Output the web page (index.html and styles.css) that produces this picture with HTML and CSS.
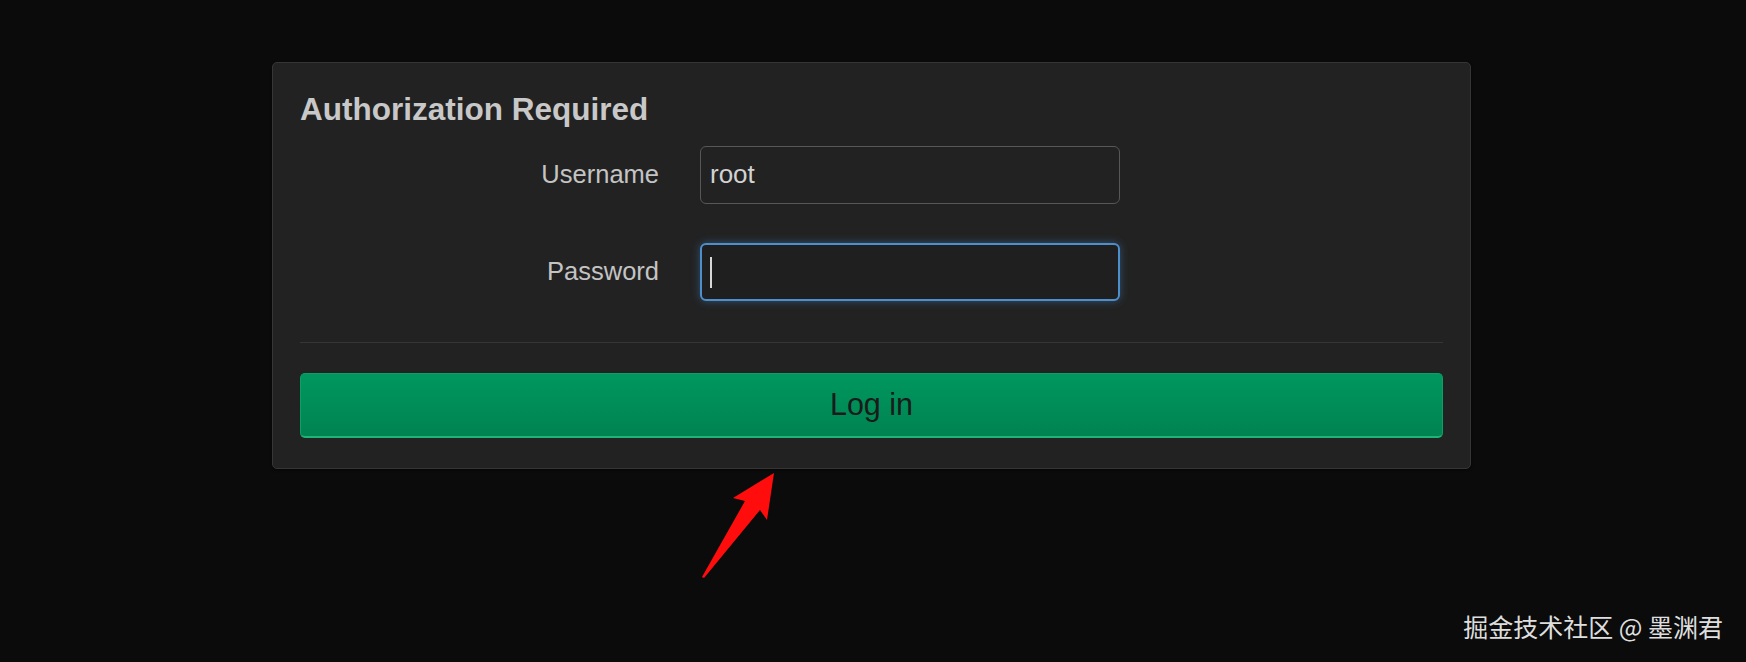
FILE: index.html
```html
<!DOCTYPE html>
<html lang="en">
<head>
  <meta charset="UTF-8" />
  <meta name="viewport" content="width=device-width, initial-scale=1.0"/>
  <title>Authorization Required</title>
  <link rel="stylesheet" href="styles.css">
</head>
<body>
  <div class="page">
    <form class="login-card" onsubmit="return false">
      <h2 class="login-title">Authorization Required</h2>

      <div class="field-row">
        <label class="field-label" for="username">Username</label>
        <input class="field-input" id="username" type="text" value="root">
      </div>

      <div class="field-row">
        <label class="field-label" for="password">Password</label>
        <div class="field-wrap">
          <input class="field-input focused" id="password" type="password">
          <span class="caret"></span>
        </div>
      </div>

      <hr class="divider">

      <button class="login-btn" type="submit">Log in</button>
    </form>
  </div>

  <!-- red pointer drawn over the screenshot -->
  <svg class="pointer" width="1746" height="662" viewBox="0 0 1746 662">
    <polygon points="774,473 767,520 760,510 704,578 702,577 745,501 733,498" fill="#ff0d0d"/>
  </svg>

  <div class="watermark">掘金技术社区 @ 墨渊君</div>
</body>
</html>
```

FILE: styles.css
```css
body, html {
  margin: 0;
  padding: 0;
  height: 100%;
  background: #0b0b0b;
  font-family: 'Liberation Sans', Arial, sans-serif;
  overflow: hidden;
}

body {
  position: relative;
}

.page {
  padding: 62px 0 0 272px;
}

.login-card {
  box-sizing: border-box;
  width: 1199px;
  padding: 28px 27px 30px 27px;
  background: #222;
  border: 1px solid #363636;
  border-radius: 5px;
  box-shadow: 0 1px 3px rgba(0, 0, 0, 0.6);
}

.login-title {
  margin: 0 0 17px 0;
  font-size: 31.5px;
  line-height: 1.2;
  font-weight: bold;
  color: #c8c8c8;
}

.field-row {
  display: grid;
  grid-template-columns: 359px 420px;
  column-gap: 41px;
  align-items: center;
  margin-bottom: 39px;
}

.field-label {
  text-align: right;
  font-size: 25.5px;
  color: #c4c4c4;
}

.field-wrap {
  position: relative;
}

.field-input {
  box-sizing: border-box;
  display: block;
  width: 420px;
  height: 58px;
  padding: 0 9px;
  margin: 0;
  background: #222;
  border: 1px solid #575757;
  border-radius: 6px;
  color: #d2d2d2;
  font-family: 'Liberation Sans', Arial, sans-serif;
  font-size: 26px;
  outline: none;
  caret-color: transparent;
}

.field-input.focused {
  background: #1f1f1f;
  border: 2px solid #4d8fca;
  box-shadow: 0 0 9px rgba(70, 140, 210, 0.45);
}

.caret {
  position: absolute;
  left: 10px;
  top: 14px;
  width: 2px;
  height: 31px;
  background: #d8d8d8;
}

.divider {
  margin: 41px 0 30px 0;
  border: none;
  border-top: 1px solid #363636;
}

.login-btn {
  display: block;
  box-sizing: border-box;
  width: 100%;
  height: 65px;
  margin: 0;
  background: linear-gradient(to bottom, #00975f, #008351);
  border: 1px solid #0c9f68;
  border-bottom: 2px solid #1db577;
  border-radius: 5px;
  color: #1b1b1b;
  font-family: 'Liberation Sans', Arial, sans-serif;
  font-size: 30.5px;
  cursor: pointer;
}

.pointer {
  position: absolute;
  left: 0;
  top: 0;
  pointer-events: none;
}

.watermark {
  position: absolute;
  top: 611px;
  right: 23px;
  font-family: 'Noto Sans CJK SC', sans-serif;
  font-size: 25px;
  line-height: 1.2;
  color: #dedede;
}
```
